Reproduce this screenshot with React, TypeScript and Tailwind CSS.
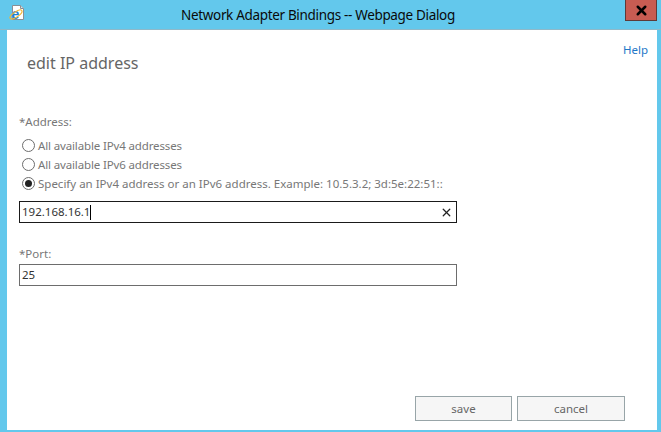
import { X } from 'lucide-react';

function IeIcon() {
  return (
    <svg width="18" height="18" viewBox="0 0 18 18" className="shrink-0">
      <path d="M4.5 1.5h8l3 3v11h-11z" fill="#fff" stroke="#8a8f94" />
      <path d="M12.5 1.5v3h3" fill="#dfe3e6" stroke="#8a8f94" />
      <text x="3.5" y="15" fontSize="14" fontWeight="700" fill="#1c7fd6" fontFamily="'Liberation Sans', sans-serif">
        e
      </text>
      <ellipse cx="8" cy="10.5" rx="7" ry="2.6" fill="none" stroke="#f2b632" strokeWidth="1.2" transform="rotate(-35 8 10.5)" />
    </svg>
  );
}

function RadioOption({ label, checked = false }: { label: string; checked?: boolean }) {
  return (
    <div className="flex h-[19px] items-center pl-[3px]">
      <span className="flex h-[13px] w-[13px] shrink-0 items-center justify-center rounded-full border border-[#6d6d6d] bg-white">
        {checked && <span className="h-[7px] w-[7px] rounded-full bg-[#222222]" />}
      </span>
      <span className={checked ? 'ml-[3px] text-[#777777]' : 'ml-[3px] tracking-[-0.14px] text-[#777777]'}>{label}</span>
    </div>
  );
}

export default function App() {
  return (
    <div className="flex h-[432px] w-[661px] flex-col overflow-hidden bg-[#63c8ec] font-['Noto_Sans','Open_Sans',sans-serif] text-[11.5px] tracking-[0px]">
      <div className="flex h-[30px] shrink-0 items-start border-b border-[#8fb9c9]">
        <div className="ml-[8px] mt-[4px]">
          <IeIcon />
        </div>
        <div className="ml-[155px] mt-[5px] text-[13.5px] leading-[20px] tracking-[-0.33px] text-[#0a0a0a]">
          Network Adapter Bindings -- Webpage Dialog
        </div>
        <div className="ml-auto mr-[4px] flex h-[21px] w-[32px] items-center justify-center border border-[#5e3a38] border-t-0 bg-[#c75c52]">
          <X size={15} strokeWidth={4} className="text-black" />
        </div>
      </div>

      <div className="ml-[7px] mr-[4px] mb-[2px] flex flex-1 flex-col bg-white pl-[12px]">
        <div className="flex justify-end pr-[9px] pt-[12px] leading-[16px] text-[#1f78c8]">Help</div>
        <h1 className="ml-[8px] mt-[-7px] text-[16px] font-normal leading-[24px] text-[#666666]">edit IP address</h1>

        <label className="mt-[39px] leading-[16px] text-[#777777]">*Address:</label>
        <div className="mt-[6px] flex flex-col">
          <RadioOption label="All available IPv4 addresses" />
          <RadioOption label="All available IPv6 addresses" />
          <RadioOption label="Specify an IPv4 address or an IPv6 address. Example: 10.5.3.2; 3d:5e:22:51::" checked />
        </div>

        <div className="mt-[8px] flex h-[22px] w-[438px] items-center border border-[#1a1a1a] pl-[2px] pr-[3px] text-[#333333]">
          <span>192.168.16.1</span>
          <span className="h-[15px] w-px bg-black" />
          <X size={13} strokeWidth={2.4} className="ml-auto text-[#222222]" />
        </div>

        <label className="mt-[23px] leading-[16px] text-[#777777]">*Port:</label>
        <div className="mt-[2px] flex h-[22px] w-[438px] items-center border border-[#6d6d6d] pl-[2px] text-[#333333]">25</div>

        <div className="mt-[110px] flex justify-end gap-[5px] pr-[32px]">
          <button className="h-[25px] w-[97px] border border-[#98a5a8] bg-[#f6f6f6] text-[#666666]">save</button>
          <button className="h-[25px] w-[108px] border border-[#98a5a8] bg-[#f6f6f6] text-[#666666]">cancel</button>
        </div>
      </div>
    </div>
  );
}
